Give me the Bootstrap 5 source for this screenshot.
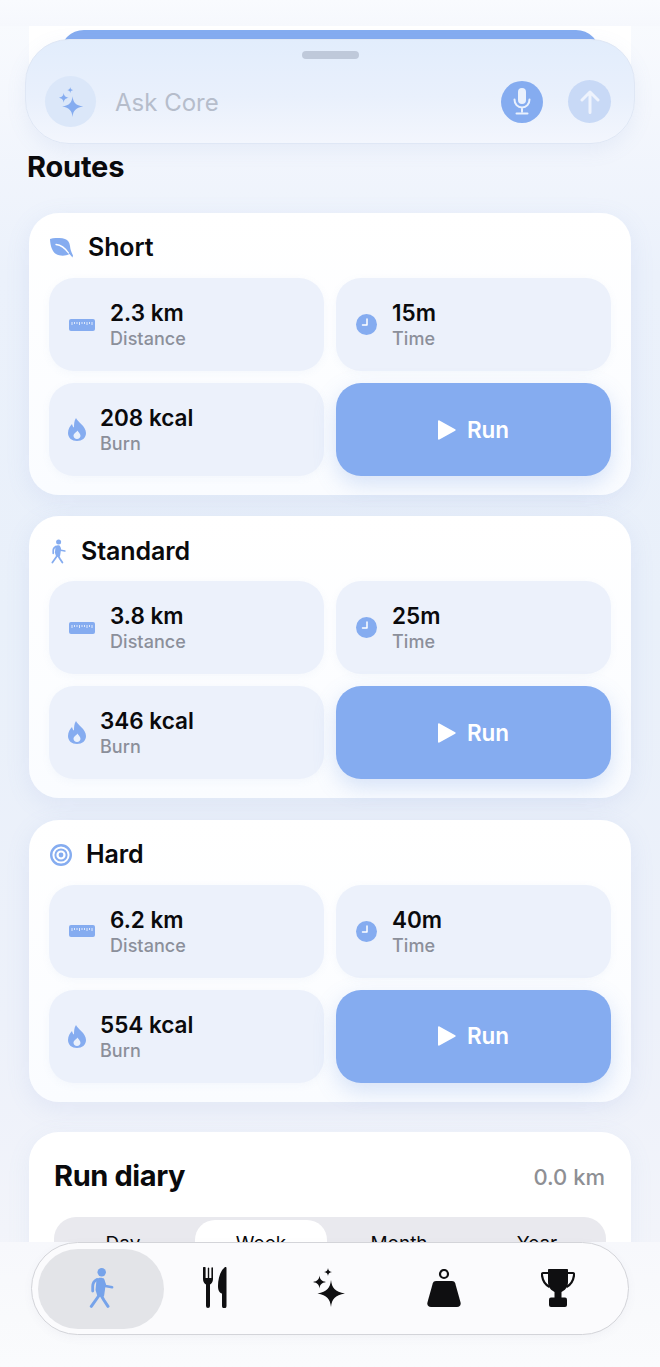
<!DOCTYPE html>
<html lang="en">
<head>
    <meta charset="UTF-8">
    <meta name="viewport" content="width=device-width, initial-scale=1.0">
    <title>Routes</title>
    <link href="https://cdn.jsdelivr.net/npm/bootstrap@5.3.0/dist/css/bootstrap.min.css" rel="stylesheet">
    <style>
        body {
            width: 660px;
            height: 1367px;
            overflow: hidden;
            position: relative;
            font-family: Inter, "Liberation Sans", sans-serif;
            color: #0a0a0c;
            background: linear-gradient(180deg, #f9fbfe 0%, #f4f7fd 8%, #ebf1fb 20%, #e9f0fa 45%, #edf1fa 75%, #f2f4fa 90%, #f8f8fb 100%);
        }
        .page-flow { padding: 26px 29px 0; }
        .peek-card { height: 70px; background: #fff; padding: 4px 31px 0; }
        .peek-btn { height: 60px; background: #85acf0; border-radius: 24px 24px 0 0; }
        .section-title { font-size: 29px; font-weight: 700; line-height: 34px; margin: 54px 0 29px -2px; letter-spacing: -0.2px; }
        .route-card {
            border: 0;
            border-radius: 30px;
            background: linear-gradient(180deg, #fff 0%, #fafcff 100%);
            box-shadow: 0 6px 24px rgba(120, 150, 210, .12);
            padding: 0 20px;
            height: 282px;
            margin-bottom: 21.4px;
        }
        .route-head { height: 65px; gap: 15px; padding: 5px 0 0 1px; font-size: 25px; font-weight: 600; letter-spacing: -0.1px; }
        .route-head.is-walk { padding-left: 2px; }
        .route-head.is-target { gap: 14px; }
        .tile-row { --bs-gutter-x: 12px; --bs-gutter-y: 12px; }
        .stat-tile {
            height: 93px;
            background: #ecf1fb;
            border-radius: 25px;
            padding-left: 20px;
            gap: 15px;
            box-shadow: 0 2px 8px rgba(120, 150, 210, .06);
        }
        .flame-ic { margin: 0 -1px; }
        .stat-val { font-size: 22.5px; font-weight: 600; line-height: 28px; }
        .stat-lbl { font-size: 18px; line-height: 23px; color: #8b8f9a; font-weight: 500; letter-spacing: .05px; }
        .run-btn {
            height: 93px;
            width: 100%;
            background: #85acf0;
            border: 0;
            border-radius: 25px;
            color: #fff;
            font-size: 22.5px;
            font-weight: 600;
            gap: 11px;
            box-shadow: 0 8px 22px rgba(110, 150, 225, .26);
        }
        .diary-card {
            border: 0;
            margin-top: 30px;
            height: 260px;
            border-radius: 30px;
            background: #fff;
            box-shadow: 0 6px 24px rgba(120, 150, 210, .09);
            padding: 22px 25px;
        }
        .diary-title { font-size: 29px; font-weight: 700; line-height: 44px; letter-spacing: -0.4px; }
        .diary-total { font-size: 22px; color: #8e8f94; font-weight: 500; padding: 3px 1px 0 0; }
        .seg-track { margin-top: 19px; height: 60px; background: #e9e9ee; border-radius: 22px; padding-top: 3px; }
        .seg-item { height: 50px; text-align: center; font-size: 19px; line-height: 42px; border-radius: 20px; padding-top: 3px; }
        .seg-item.is-on { background: #fff; width: 132px; margin: 0 3px; }
        .seg-item.is-off { width: 138px; }
        .top-veil { position: absolute; left: 0; right: 0; top: 0; height: 26px; background: linear-gradient(180deg, #f9fbfe, #f6f8fd); }
        .ask-bar {
            position: absolute;
            left: 25px;
            top: 39px;
            width: 610px;
            height: 105px;
            border-radius: 44px;
            border: 1px solid #dfe7f5;
            background: linear-gradient(180deg, #e2edfc 0%, #e9f0fc 55%, #f3f6fd 100%);
            box-shadow: 0 6px 20px rgba(120, 150, 210, .1);
        }
        .ask-handle { position: absolute; left: 276px; top: 11px; width: 57px; height: 8px; border-radius: 4px; background: #bfc9da; }
        .ask-row { padding: 36px 23px 0 19px; }
        .ask-spark { width: 51px; height: 51px; border-radius: 50%; background: #dbe7f9; }
        .ask-text { font-size: 24px; color: #b6bdcb; margin-left: 19px; font-weight: 400; padding-top: 2px; }
        .ask-mic { width: 42px; height: 42px; border-radius: 50%; background: #85acf0; }
        .ask-send { width: 43px; height: 43px; border-radius: 50%; background: #c8d9f6; margin-left: 25px; }
        .bottom-veil { position: absolute; left: 0; right: 0; top: 1242px; bottom: 0; background: linear-gradient(180deg, #f7f8fc, #f9fafc 60%, #fafbfd); }
        .tab-bar {
            position: absolute;
            left: 31px;
            top: 1242px;
            width: 598px;
            height: 93px;
            border-radius: 47px;
            border: 1px solid #d3d4d9;
            background: #fbfbfd;
            padding: 6px;
            box-shadow: 0 3px 10px rgba(90, 100, 130, .05);
        }
        .tab-on { width: 126px; height: 80px; border-radius: 40px; background: #e3e4e8; padding-bottom: 2px; }
        .tab-off { width: 114.5px; height: 80px; padding-bottom: 2px; }
        .tab-off.is-first { margin-left: -6.5px; }
    </style>
</head>
<body>
    <svg width="0" height="0" class="position-absolute">
        <defs>
            <symbol id="ic-ruler" viewBox="0 0 26 12"><rect width="26" height="12" rx="2" fill="#85acf0"/><path d="M3 3v3M5.500 3v2M8 3v2M10.500 3v3M13 3v2M15.500 3v2M18 3v3M20.500 3v2M23 3v3" stroke="#dfe9fb" stroke-width="1"/></symbol>
            <symbol id="ic-clock" viewBox="0 0 21 21"><circle cx="10.500" cy="10.500" r="10.500" fill="#85acf0"/><path d="M11 5v6H6.500" fill="none" stroke="#fff" stroke-width="1.500" stroke-linecap="round" stroke-linejoin="round"/></symbol>
            <symbol id="ic-flame" viewBox="0 0 18 23"><path d="M8 0c1 3.500 10 8 10 15 0 5-4 8-9 8s-9-3-9-8c0-4 2-7 4-9 .5 2 1 3 2 3.500C6 6.500 6 3 8 0z" fill="#85acf0"/><path d="M9.500 12.500c.3 1.500 3 2.800 3 5.300 0 2-1.500 3.200-3.500 3.200s-3.500-1.200-3.500-3.200c0-2.500 3-3.500 4-5.300z" fill="#eaf1fc"/></symbol>
            <symbol id="ic-play" viewBox="0 0 18 20"><path d="M0 1.200v17.600c0 .8.700 1.200 1.400.8l15.800-8.800c.6-.4.600-1.200 0-1.600L1.400.4C.7 0 0 .4 0 1.200z" fill="#fff"/></symbol>
            <symbol id="ic-walk" viewBox="0 0 25 40">
                <circle cx="12.700" cy="4.200" r="4.200" fill="currentColor"/>
                <path d="M8 11.500C5 13 3.700 15.500 3.700 18.500V23" fill="none" stroke="currentColor" stroke-width="2.800" stroke-linecap="round" stroke-linejoin="round"/>
                <path d="M14 11.500l2.300 6.500 6.900 1.200" fill="none" stroke="currentColor" stroke-width="2.400" stroke-linecap="round" stroke-linejoin="round"/>
                <path d="M7.500 11.500c1.800-2.300 6.300-2.300 7.500 0l1.500 6.500-1.500 10.500H8.500L6.500 22z" fill="currentColor"/>
                <path d="M10 27.500 2.300 38.300M12.500 28l2.300 4 4.200 6.300" fill="none" stroke="currentColor" stroke-width="3" stroke-linecap="round" stroke-linejoin="round"/>
            </symbol>
            <symbol id="ic-spark" viewBox="0 0 32 39">
                <path d="M18 12c.9 8 3.800 11.800 14 13.500C21.800 27.200 18.900 31 18 39c-.9-8-3.800-11.800-13.500-13.500C14.200 23.800 17.100 20 18 12z" fill="currentColor"/>
                <path d="M6.500 7.500c.4 3.800 1.900 5.600 6.500 6.500-4.600.9-6.100 2.700-6.500 6.500C6.100 16.700 4.600 14.900 0 14c4.600-.9 6.100-2.700 6.500-6.500z" fill="currentColor"/>
                <path d="M15 0c.3 2.400 1.200 3.500 4 4-2.800.5-3.700 1.600-4 4-.3-2.400-1.200-3.500-4-4 2.800-.5 3.700-1.600 4-4z" fill="currentColor"/>
            </symbol>
        </defs>
    </svg>

    <div class="page-flow">
        <div class="peek-card"><div class="peek-btn"></div></div>
        <h2 class="section-title">Routes</h2>

        <!-- route cards -->
        <div class="card route-card">
            <div class="route-head d-flex align-items-center">
                <svg width="23" height="20" viewBox="0 0 23 20"><path d="M0 1C5-.5 11-.3 15 1c3 1 4.500 3.500 5 7 .3 3 1 5.500 3 9.500l-.5 2-3-3.500C15 18.500 9.500 18 6 16 2 13.500.3 7.500 0 1z" fill="#85acf0"/><path d="M6 6.500c4.500.5 9 3.500 12.500 8.500" fill="none" stroke="#fff" stroke-width="1.300" stroke-linecap="round"/></svg>
                <span>Short</span>
            </div>
            <div class="row tile-row">
                <div class="col-6"><div class="stat-tile d-flex align-items-center"><svg width="26" height="12"><use href="#ic-ruler"/></svg><div><div class="stat-val">2.3 km</div><div class="stat-lbl">Distance</div></div></div></div>
                <div class="col-6"><div class="stat-tile d-flex align-items-center"><svg width="21" height="21"><use href="#ic-clock"/></svg><div><div class="stat-val">15m</div><div class="stat-lbl">Time</div></div></div></div>
                <div class="col-6"><div class="stat-tile d-flex align-items-center"><svg class="flame-ic" width="18" height="23"><use href="#ic-flame"/></svg><div><div class="stat-val">208 kcal</div><div class="stat-lbl">Burn</div></div></div></div>
                <div class="col-6"><button class="btn run-btn d-flex align-items-center justify-content-center"><svg width="18" height="20"><use href="#ic-play"/></svg>Run</button></div>
            </div>
        </div>

        <div class="card route-card">
            <div class="route-head is-walk d-flex align-items-center">
                <svg width="15" height="25" style="color:#85acf0"><use href="#ic-walk"/></svg>
                <span>Standard</span>
            </div>
            <div class="row tile-row">
                <div class="col-6"><div class="stat-tile d-flex align-items-center"><svg width="26" height="12"><use href="#ic-ruler"/></svg><div><div class="stat-val">3.8 km</div><div class="stat-lbl">Distance</div></div></div></div>
                <div class="col-6"><div class="stat-tile d-flex align-items-center"><svg width="21" height="21"><use href="#ic-clock"/></svg><div><div class="stat-val">25m</div><div class="stat-lbl">Time</div></div></div></div>
                <div class="col-6"><div class="stat-tile d-flex align-items-center"><svg class="flame-ic" width="18" height="23"><use href="#ic-flame"/></svg><div><div class="stat-val">346 kcal</div><div class="stat-lbl">Burn</div></div></div></div>
                <div class="col-6"><button class="btn run-btn d-flex align-items-center justify-content-center"><svg width="18" height="20"><use href="#ic-play"/></svg>Run</button></div>
            </div>
        </div>

        <div class="card route-card">
            <div class="route-head is-target d-flex align-items-center">
                <svg width="22" height="22" viewBox="0 0 22 22"><circle cx="11" cy="11" r="9.800" fill="none" stroke="#85acf0" stroke-width="2.400"/><circle cx="11" cy="11" r="5.600" fill="none" stroke="#85acf0" stroke-width="2"/><circle cx="11" cy="11" r="2.400" fill="#85acf0"/></svg>
                <span>Hard</span>
            </div>
            <div class="row tile-row">
                <div class="col-6"><div class="stat-tile d-flex align-items-center"><svg width="26" height="12"><use href="#ic-ruler"/></svg><div><div class="stat-val">6.2 km</div><div class="stat-lbl">Distance</div></div></div></div>
                <div class="col-6"><div class="stat-tile d-flex align-items-center"><svg width="21" height="21"><use href="#ic-clock"/></svg><div><div class="stat-val">40m</div><div class="stat-lbl">Time</div></div></div></div>
                <div class="col-6"><div class="stat-tile d-flex align-items-center"><svg class="flame-ic" width="18" height="23"><use href="#ic-flame"/></svg><div><div class="stat-val">554 kcal</div><div class="stat-lbl">Burn</div></div></div></div>
                <div class="col-6"><button class="btn run-btn d-flex align-items-center justify-content-center"><svg width="18" height="20"><use href="#ic-play"/></svg>Run</button></div>
            </div>
        </div>

        <div class="card diary-card">
            <div class="d-flex justify-content-between align-items-center">
                <div class="diary-title">Run diary</div>
                <div class="diary-total">0.0 km</div>
            </div>
            <div class="seg-track d-flex">
                <div class="seg-item is-off">Day</div>
                <div class="seg-item is-on">Week</div>
                <div class="seg-item is-off">Month</div>
                <div class="seg-item is-off">Year</div>
            </div>
        </div>
    </div>

    <!-- floating layers -->
    <div class="top-veil"></div>
    <div class="ask-bar">
        <div class="ask-handle"></div>
        <div class="ask-row d-flex align-items-center">
            <div class="ask-spark d-flex align-items-center justify-content-center"><svg width="26" height="30" style="color:#85acf0"><use href="#ic-spark"/></svg></div>
            <div class="ask-text flex-grow-1">Ask Core</div>
            <div class="ask-mic d-flex align-items-center justify-content-center">
                <svg width="18" height="27" viewBox="0 0 18 27"><rect x="5" y="0" width="8" height="16" rx="4" fill="#eaf1fd"/><path d="M1.500 11.500C1.500 16 4.500 19.500 9 19.500s7.500-3.500 7.500-8M9 19.500v4M3.500 25.500h11" fill="none" stroke="#eaf1fd" stroke-width="2" stroke-linecap="round"/></svg>
            </div>
            <div class="ask-send d-flex align-items-center justify-content-center">
                <svg width="20" height="24" viewBox="0 0 20 24"><path d="M10 22.500V2M2 10l8-8 8 8" fill="none" stroke="#eef3fd" stroke-width="3" stroke-linecap="round" stroke-linejoin="round"/></svg>
            </div>
        </div>
    </div>

    <div class="bottom-veil"></div>
    <nav class="tab-bar d-flex align-items-center">
        <div class="tab-on d-flex align-items-center justify-content-center"><svg width="25" height="40" style="color:#76a3ea"><use href="#ic-walk"/></svg></div>
        <div class="tab-off is-first d-flex align-items-center justify-content-center">
            <svg width="25" height="41" viewBox="0 0 25 41" fill="#0f0f11"><path d="M1 1v11c0 3 1.500 4.500 3 5.500V39a2 2 0 0 0 4 0V17.500c1.500-1 3-2.500 3-5.500V1a.8.800 0 0 0-1.600 0v10H7.200V1a.8.800 0 0 0-1.400 0v10H3.600V1A1.300 1.300 0 0 0 1 1z"/><path d="M24.500 1c0-1-1.200-1.200-2-.5C18 4 16 12 16 19c0 3 .5 5 2 6.500.8.800 2 .8 2 1.500V39a2.200 2.200 0 0 0 4.500 0z"/></svg>
        </div>
        <div class="tab-off d-flex align-items-center justify-content-center">
            <svg width="32" height="39" style="color:#0f0f11"><use href="#ic-spark"/></svg>
        </div>
        <div class="tab-off d-flex align-items-center justify-content-center">
            <svg width="34" height="38" viewBox="0 0 34 38"><circle cx="17" cy="5" r="4" fill="none" stroke="#0f0f11" stroke-width="2.200"/><path d="M9 12h16c1.600 0 2.700.7 3.200 2.200l5.300 19c.7 2.700-.7 4.800-3.500 4.800H4c-2.800 0-4.200-2.100-3.500-4.800l5.300-19C6.300 12.700 7.400 12 9 12z" fill="#0f0f11"/></svg>
        </div>
        <div class="tab-off d-flex align-items-center justify-content-center">
            <svg width="34" height="38" viewBox="0 0 34 38" fill="#0f0f11"><path d="M8 0h18c.6 0 1 .4 1 1v12c0 5.500-3.500 8.500-6.500 10v6h-7v-6C10.500 21.500 7 18.500 7 13V1c0-.6.400-1 1-1z"/><path d="M8 4H2.200C1 4 .8 5 1 6.500c.7 5 2.500 9 7.500 11.500M26 4h5.800c1.200 0 1.400 1 1.200 2.500-.7 5-2.500 9-7.500 11.500" fill="none" stroke="#0f0f11" stroke-width="2.200"/><rect x="8" y="28.500" width="18" height="9.500" rx="2"/></svg>
        </div>
    </nav>
    <script src="https://cdn.jsdelivr.net/npm/bootstrap@5.3.0/dist/js/bootstrap.bundle.min.js"></script>
</body>
</html>
